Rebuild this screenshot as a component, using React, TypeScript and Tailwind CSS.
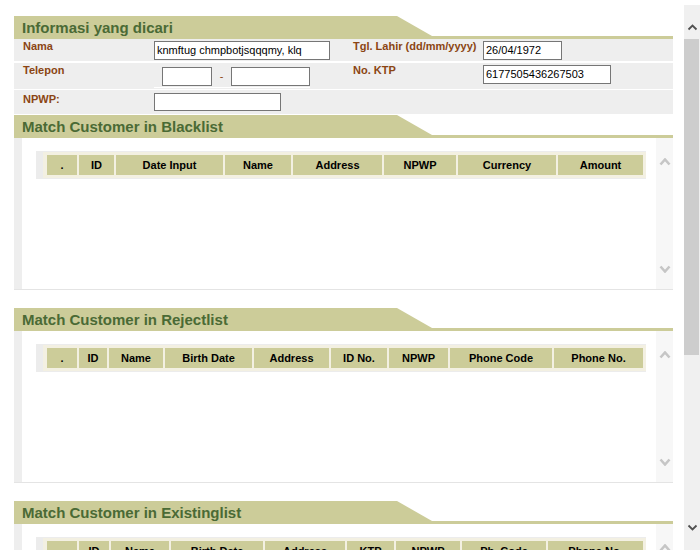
import React from "react";

type Col = [string, number];

const blackCols: Col[] = [
  [".", 30], ["ID", 35], ["Date Input", 107], ["Name", 66], ["Address", 89], ["NPWP", 72], ["Currency", 98], ["Amount", 85],
];
const rejectCols: Col[] = [
  [".", 30], ["ID", 28], ["Name", 54], ["Birth Date", 87], ["Address", 75], ["ID No.", 56], ["NPWP", 59], ["Phone Code", 102], ["Phone No.", 89],
];
const existCols: Col[] = [
  [".", 30], ["ID", 30], ["Name", 58], ["Birth Date", 92], ["Address", 80], ["KTP", 47], ["NPWP", 64], ["Ph. Code", 84], ["Phone No.", 95],
];

function Header({ title }: { title: string }) {
  return (
    <div className="flex h-[23px] shrink-0">
      <div className="w-[383px] bg-[#cccc99] pl-[8px] flex items-center">
        <span className="text-[15px] leading-none font-bold text-[#4a6a35] font-['Liberation_Sans',Arial,sans-serif]">
          {title}
        </span>
      </div>
      <div className="flex-1 flex flex-col">
        <svg width="35" height="20" className="block shrink-0">
          <polygon points="0,0 35,20 0,20" fill="#cccc99" />
        </svg>
        <div className="h-[3px] bg-[#cccc99]" />
      </div>
    </div>
  );
}

function Chev({ up, color, w, h, sw }: { up: boolean; color: string; w: number; h: number; sw: number }) {
  const pts = up
    ? `1.5,${h - 1.5} ${w / 2},1.5 ${w - 1.5},${h - 1.5}`
    : `1.5,1.5 ${w / 2},${h - 1.5} ${w - 1.5},1.5`;
  return (
    <svg width={w} height={h} className="block shrink-0">
      <polyline points={pts} fill="none" stroke={color} strokeWidth={sw} />
    </svg>
  );
}

function Panel({ cols }: { cols: Col[] }) {
  return (
    <div className="flex h-[152px] shrink-0 border-b border-[#e4e4e4]">
      <div className="w-[8px] bg-[#eeeeee]" />
      <div className="flex-1 bg-white pt-[13px] pl-[14px] pr-[10px]">
        <div className="bg-[#ececec] pl-[7px] py-[1px]">
          <div className="bg-[#f3f0e2] pl-[4px] pr-[3px] py-[3px] flex gap-[2px]">
            {cols.map(([n, w], i) => (
              <div
                key={i}
                style={{ width: w }}
                className="h-[20px] bg-[#cccc99] flex items-center justify-center text-[11px] leading-none font-bold text-black whitespace-nowrap overflow-hidden"
              >
                {n}
              </div>
            ))}
          </div>
        </div>
      </div>
      <div className="w-[17px] bg-[#f7f7f7] flex flex-col items-center pt-[20px] pb-[16px]">
        <Chev up color="#c6c6c6" w={12} h={8} sw={2.6} />
        <div className="flex-1" />
        <Chev up={false} color="#c6c6c6" w={12} h={8} sw={2.6} />
      </div>
    </div>
  );
}

function Input({ w, h = 19, value = "" }: { w: number; h?: number; value?: string }) {
  return (
    <div
      style={{ width: w, height: h }}
      className="border border-[#767676] bg-white pl-[2px] flex items-center text-[11px] leading-none text-black whitespace-nowrap overflow-hidden"
    >
      {value}
    </div>
  );
}

function Label({ children, pt }: { children: React.ReactNode; pt: string }) {
  return (
    <div className={`${pt} text-[11px] leading-[13px] font-bold text-[#8b4513]`}>{children}</div>
  );
}

export default function App() {
  return (
    <div className="flex h-[550px] w-[700px] overflow-hidden bg-white font-['Liberation_Sans',Arial,sans-serif]">
      <div className="w-[684px] pl-[14px] pr-[11px] pt-[16px] flex flex-col">
        <Header title="Informasi yang dicari" />
        {/* Row 1 */}
        <div className="h-[22px] shrink-0 grid grid-cols-[140px_198px_131px_1fr] bg-[#eeeeee] mb-[2px]">
          <div className="pl-[9px]"><Label pt="pt-[1px]">Nama</Label></div>
          <div className="pt-[2px]"><Input w={176} value="knmftug chmpbotjsqqqmy, klq" /></div>
          <div className="pl-[1px]"><Label pt="pt-[1px]">Tgl. Lahir (dd/mm/yyyy)</Label></div>
          <div className="pt-[2px]"><Input w={79} value="26/04/1972" /></div>
        </div>
        {/* Row 2 */}
        <div className="h-[26px] shrink-0 grid grid-cols-[140px_198px_131px_1fr] bg-[#eeeeee] mb-[1px]">
          <div className="pl-[9px]"><Label pt="pt-[1px]">Telepon</Label></div>
          <div className="pt-[4px]">
            <div className="w-[156px] flex items-center pl-[8px] pb-[1px] border-b border-white">
              <Input w={50} />
              <div className="w-[19px] text-center text-[11px] leading-none text-[#8b4513]">-</div>
              <Input w={79} />
            </div>
          </div>
          <div className="pl-[1px]"><Label pt="pt-[1px]">No. KTP</Label></div>
          <div className="pt-[2px]"><Input w={128} value="6177505436267503" /></div>
        </div>
        {/* Row 3 */}
        <div className="h-[24px] shrink-0 grid grid-cols-[140px_198px_131px_1fr] bg-[#eeeeee] mb-[1px]">
          <div className="pl-[9px]"><Label pt="pt-[3px]">NPWP:</Label></div>
          <div className="pt-[3px]"><Input w={127} h={18} /></div>
          <div />
          <div />
        </div>

        <Header title="Match Customer in Blacklist" />
        <Panel cols={blackCols} />
        <div className="h-[18px] shrink-0" />
        <Header title="Match Customer in Rejectlist" />
        <Panel cols={rejectCols} />
        <div className="h-[18px] shrink-0" />
        <Header title="Match Customer in Existinglist" />
        <Panel cols={existCols} />
      </div>
      <div className="w-[16px] mt-[5px] bg-[#f0f0f0] flex flex-col items-center">
        <div className="mt-[19px]">
          <Chev up color="#505050" w={11} h={7} sw={1.8} />
        </div>
        <div className="mt-[8px] h-[316px] w-[15px] self-start bg-[#cdcdcd]" />
        <div className="flex-1" />
        <Chev up={false} color="#505050" w={11} h={7} sw={1.8} />
        <div className="h-[19px]" />
      </div>
    </div>
  );
}
